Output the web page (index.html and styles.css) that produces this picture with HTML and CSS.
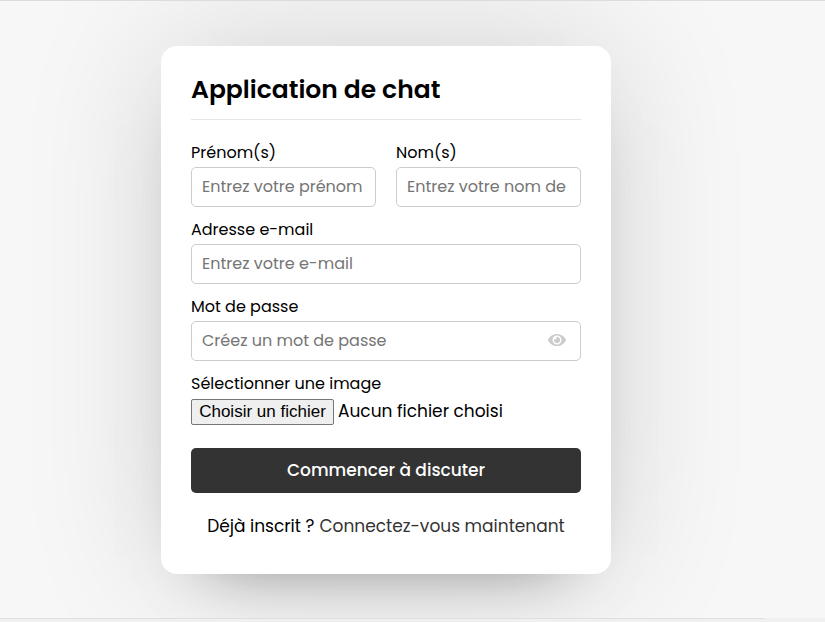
FILE: index.html
```html
<!DOCTYPE html>
<html lang="fr">
<head>
<meta charset="utf-8">
<title>Application de chat</title>
<link rel="stylesheet" href="styles.css">
</head>
<body>
<main class="wrapper">
  <header><span class="t title">Application de chat</span></header>
  <form>
    <div class="names">
      <div class="field"><label><span class="t">Prénom(s)</span></label><div class="input"><span class="t">Entrez votre prénom</span></div></div>
      <div class="field"><label><span class="t">Nom(s)</span></label><div class="input"><span class="t">Entrez votre nom de</span></div></div>
    </div>
    <div class="field"><label><span class="t">Adresse e-mail</span></label><div class="input"><span class="t">Entrez votre e-mail</span></div></div>
    <div class="field"><label><span class="t">Mot de passe</span></label><div class="input password"><span class="t">Créez un mot de passe</span>
      <svg class="eye" viewBox="0 0 576 512"><path fill="#ccc" d="M572.5 241.4C518.3 135.6 410.9 64 288 64S57.7 135.6 3.5 241.4a32.4 32.4 0 0 0 0 29.2C57.7 376.4 165.1 448 288 448s230.3-71.6 284.5-177.4a32.4 32.4 0 0 0 0-29.2zM288 400a144 144 0 1 1 144-144 143.9 143.9 0 0 1-144 144zm0-240a95.3 95.3 0 0 0-25.3 3.8 47.9 47.9 0 0 1-66.9 66.9A95.8 95.8 0 1 0 288 160z"/></svg></div></div>
    <div class="field image"><label><span class="t">Sélectionner une image</span></label><div class="file"><button type="button"><span class="t">Choisir un fichier</span></button><span class="t nofile">Aucun fichier choisi</span></div></div>
    <button class="submit" type="button"><span class="t">Commencer à discuter</span></button>
  </form>
  <p class="link"><span class="t">Déjà inscrit ?</span><a><span class="t">Connectez-vous maintenant</span></a></p>
</main>
<footer class="edge"><div class="edge-line"></div></footer>
</body>
</html>
```
FILE: styles.css
```css
* { box-sizing: border-box; margin: 0; padding: 0; }
body {
  display: flex;
  flex-direction: column;
  height: 622px;
  overflow: hidden;
  padding-top: 45px;
  border-top: 1px solid #dcdcdc;
  background: #f7f7f7;
  color: #000;
  font: 16px/24px Poppins, Lato, "Open Sans", sans-serif;
}
.wrapper {
  width: 450px;
  height: 528px;
  margin-left: 161px;
  padding: 25px 30px;
  border-radius: 16px;
  background: #fff;
  box-shadow: 0 0 144px rgba(0,0,0,.14), 0 32px 64px -48px rgba(0,0,0,.5);
}
.t { display: inline-block; white-space: nowrap; }
header {
  height: 49px;
  padding-bottom: 10px;
  border-bottom: 1px solid #e6e6e6;
  font-size: 25px;
  font-weight: 600;
  line-height: 38px;
}
form { margin-top: 20px; }
.names { display: flex; gap: 20px; }
.field { flex: 1; margin-bottom: 10px; }
label { display: block; height: 27px; line-height: 26px; }
.input {
  display: flex;
  align-items: center;
  height: 40px;
  padding: 0 10px;
  border: 1px solid #ccc;
  border-radius: 5px;
  color: #757575;
}
.password { justify-content: space-between; padding-right: 14px; }
.eye { width: 18px; height: 16px; margin-bottom: 2px; }
.file { display: flex; align-items: center; gap: 4px; height: 27px; }
.file button {
  width: 143px;
  height: 26px;
  border: 1px solid #767676;
  border-radius: 2px;
  background: #efefef;
  font: 17px "Liberation Sans", Arial, sans-serif;
}
.nofile { margin-bottom: 2px; font-size: 17px; line-height: 24px; }
.submit {
  display: block;
  width: 390px;
  height: 45px;
  margin-top: 23px;
  padding-bottom: 2px;
  border: 0;
  border-radius: 5px;
  background: #333;
  color: #fff;
  font: 500 17px Poppins, Lato, sans-serif;
}
.link { display: flex; justify-content: center; gap: 5px; margin-top: 21px; font-size: 17px; }
.link a { color: #333; }
.edge { z-index: 1; height: 4px; margin-top: auto; background: #f0f0f0; }
.edge-line { width: 764px; height: 1px; background: #dfdfdf; }
```
